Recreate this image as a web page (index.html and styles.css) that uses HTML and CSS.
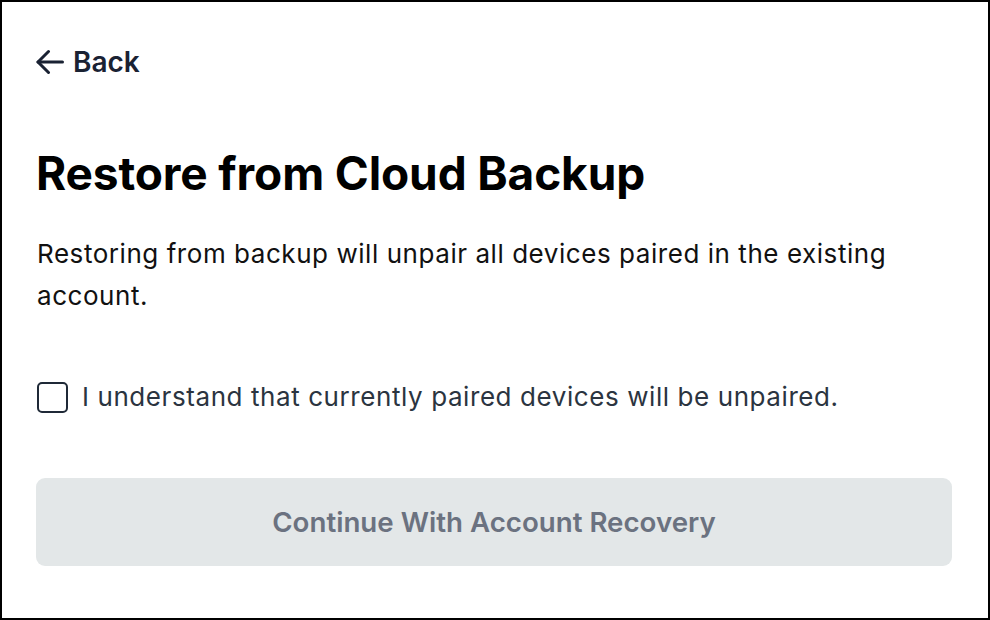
FILE: index.html
```html
<!DOCTYPE html>
<html>
<head>
<meta charset="utf-8">
<link rel="stylesheet" href="styles.css">
</head>
<body>
<div class="frame">
  <a class="back" href="#">
    <svg class="back-icon" width="28" height="28" viewBox="0 0 28 28" fill="none" stroke="#1a2233" stroke-width="3" stroke-linecap="round" stroke-linejoin="round">
      <path d="M26.5 14H2"/>
      <path d="M12.5 3.5L2 14L12.5 24.5"/>
    </svg>
    <span>Back</span>
  </a>
  <h1 class="title">Restore from Cloud Backup</h1>
  <p class="desc">Restoring from backup will unpair all devices paired in the existing account.</p>
  <label class="check">
    <span class="box"></span>
    <span class="check-text">I understand that currently paired devices will be unpaired.</span>
  </label>
  <button class="cta" disabled>Continue With Account Recovery</button>
</div>
</body>
</html>
```
FILE: styles.css
```css
html, body {
  margin: 0;
  padding: 0;
  background: #ffffff;
}
.frame {
  box-sizing: border-box;
  width: 990px;
  height: 620px;
  border: 2px solid #000;
  padding: 38px 36px 0 34px;
  display: flex;
  flex-direction: column;
  font-family: Inter, "Noto Sans", sans-serif;
}
.back {
  display: flex;
  align-items: center;
  gap: 9px;
  color: #1a2233;
  text-decoration: none;
  font-size: 28px;
  font-weight: 600;
  height: 44px;
}
.back-icon {
  display: block;
}
.title {
  margin: 61px 0 0 0;
  font-size: 46px;
  font-weight: 700;
  line-height: 56px;
  letter-spacing: -0.12px;
  color: #000;
}
.desc {
  margin: 32px 0 0 0;
  font-size: 26px;
  line-height: 42px;
  letter-spacing: 0.55px;
  color: #111;
  padding-left: 1px;
}
.check {
  display: flex;
  align-items: center;
  gap: 14px;
  margin-top: 64px;
  padding-left: 1px;
  height: 32px;
}
.box {
  box-sizing: border-box;
  width: 31px;
  height: 31px;
  border: 2px solid #1f2937;
  border-radius: 5px;
  flex: none;
}
.check-text {
  font-size: 26px;
  letter-spacing: 0.58px;
  color: #2b3440;
  line-height: 32px;
}
.cta {
  margin-top: 65px;
  height: 88px;
  border: none;
  border-radius: 9px;
  background: #e3e7e8;
  color: #6b7280;
  font-family: Inter, "Noto Sans", sans-serif;
  font-size: 27.7px;
  font-weight: 600;
}
```
